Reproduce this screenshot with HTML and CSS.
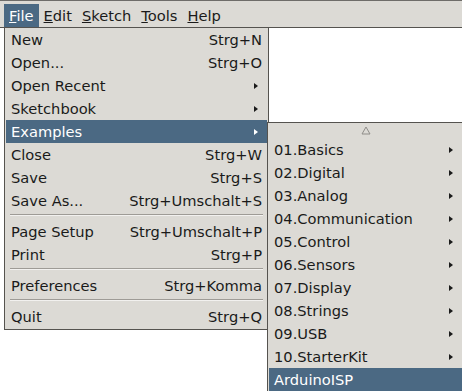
FILE: index.html
```html
<!DOCTYPE html>
<html lang="en">
<head>
  <meta charset="UTF-8">
  <title>Arduino - File Menu</title>
  <link rel="stylesheet" href="styles.css">
</head>
<body>
  <div class="window">
    <!-- Menu bar -->
    <div class="menubar">
      <span class="mb-item active"><u>F</u>ile</span>
      <span class="mb-item"><u>E</u>dit</span>
      <span class="mb-item"><u>S</u>ketch</span>
      <span class="mb-item"><u>T</u>ools</span>
      <span class="mb-item"><u>H</u>elp</span>
    </div>

    <div class="editor"></div>

    <!-- File dropdown -->
    <div class="menu file-menu">
      <div class="item"><span>New</span><span class="key">Strg+N</span></div>
      <div class="item"><span>Open...</span><span class="key">Strg+O</span></div>
      <div class="item"><span>Open Recent</span><i class="arrow"></i></div>
      <div class="item"><span>Sketchbook</span><i class="arrow"></i></div>
      <div class="item selected"><span>Examples</span><i class="arrow"></i></div>
      <div class="item"><span>Close</span><span class="key">Strg+W</span></div>
      <div class="item"><span>Save</span><span class="key">Strg+S</span></div>
      <div class="item"><span>Save As...</span><span class="key">Strg+Umschalt+S</span></div>
      <div class="sep"></div>
      <div class="item"><span>Page Setup</span><span class="key">Strg+Umschalt+P</span></div>
      <div class="item"><span>Print</span><span class="key">Strg+P</span></div>
      <div class="sep"></div>
      <div class="item"><span>Preferences</span><span class="key">Strg+Komma</span></div>
      <div class="sep"></div>
      <div class="item"><span>Quit</span><span class="key">Strg+Q</span></div>
    </div>

    <!-- Examples submenu -->
    <div class="menu examples-menu">
      <div class="scroll-up">
        <svg width="10" height="9" viewBox="0 0 10 9"><polygon points="5,1 9,8 1,8" fill="none" stroke="#8f8d89" stroke-width="1"/></svg>
      </div>
      <div class="item"><span>01.Basics</span><i class="arrow"></i></div>
      <div class="item"><span>02.Digital</span><i class="arrow"></i></div>
      <div class="item"><span>03.Analog</span><i class="arrow"></i></div>
      <div class="item"><span>04.Communication</span><i class="arrow"></i></div>
      <div class="item"><span>05.Control</span><i class="arrow"></i></div>
      <div class="item"><span>06.Sensors</span><i class="arrow"></i></div>
      <div class="item"><span>07.Display</span><i class="arrow"></i></div>
      <div class="item"><span>08.Strings</span><i class="arrow"></i></div>
      <div class="item"><span>09.USB</span><i class="arrow"></i></div>
      <div class="item"><span>10.StarterKit</span><i class="arrow"></i></div>
      <div class="item selected"><span>ArduinoISP</span></div>
    </div>
  </div>
</body>
</html>
```

FILE: styles.css
```css
/* Global */
* {
  margin: 0;
  padding: 0;
  box-sizing: border-box;
}

body {
  background-color: #fff;
  font-family: 'DejaVu Sans', 'Liberation Sans', sans-serif;
  font-size: 14.67px;
  color: #1a1a1a;
  overflow: hidden;
}

.window {
  position: relative;
  width: 462px;
  height: 391px;
}

/* Menu bar */
.menubar {
  display: flex;
  height: 28px;
  padding-left: 4px;
  background-color: #dcdad5;
  border-top: 1px solid #6e6c69;
  border-bottom: 1px solid #55534f;
}

.mb-item {
  margin-top: 3px;
  height: 23px;
  line-height: 23px;
  padding: 0 5px;
}

.mb-item.active {
  background-color: #4b6983;
  color: #fff;
}

.editor {
  height: 363px;
  background-color: #fff;
}

/* Dropdown menus */
.menu {
  position: absolute;
  background-color: #dcdad5;
  border: 1px solid #55534f;
}

.file-menu {
  left: 4px;
  top: 27px;
  width: 265px;
  padding: 0 1px 1px;
}

.examples-menu {
  left: 267px;
  top: 122px;
  width: 197px;
  height: 280px;
  padding: 0 1px;
}

.item {
  display: flex;
  justify-content: space-between;
  align-items: center;
  height: 23px;
  line-height: 23px;
  padding: 0 5px 0 5px;
  white-space: nowrap;
}

.item.selected {
  background-color: #4b6983;
  color: #fff;
}

.key {
  color: #1a1a1a;
}

.arrow {
  display: block;
  width: 0;
  height: 0;
  margin-right: 4px;
  border-left: 4px solid #1a1a1a;
  border-top: 3.5px solid transparent;
  border-bottom: 3.5px solid transparent;
}

.item.selected .arrow {
  border-left-color: #fff;
}

.sep {
  height: 6px;
  padding: 0 4px;
}

.sep::before {
  content: "";
  display: block;
  margin-top: 2px;
  height: 1px;
  background-color: #9e9b96;
  border-bottom: 1px solid #f2f1ef;
  box-sizing: content-box;
}

.scroll-up {
  display: flex;
  justify-content: center;
  align-items: center;
  height: 15px;
}
```
